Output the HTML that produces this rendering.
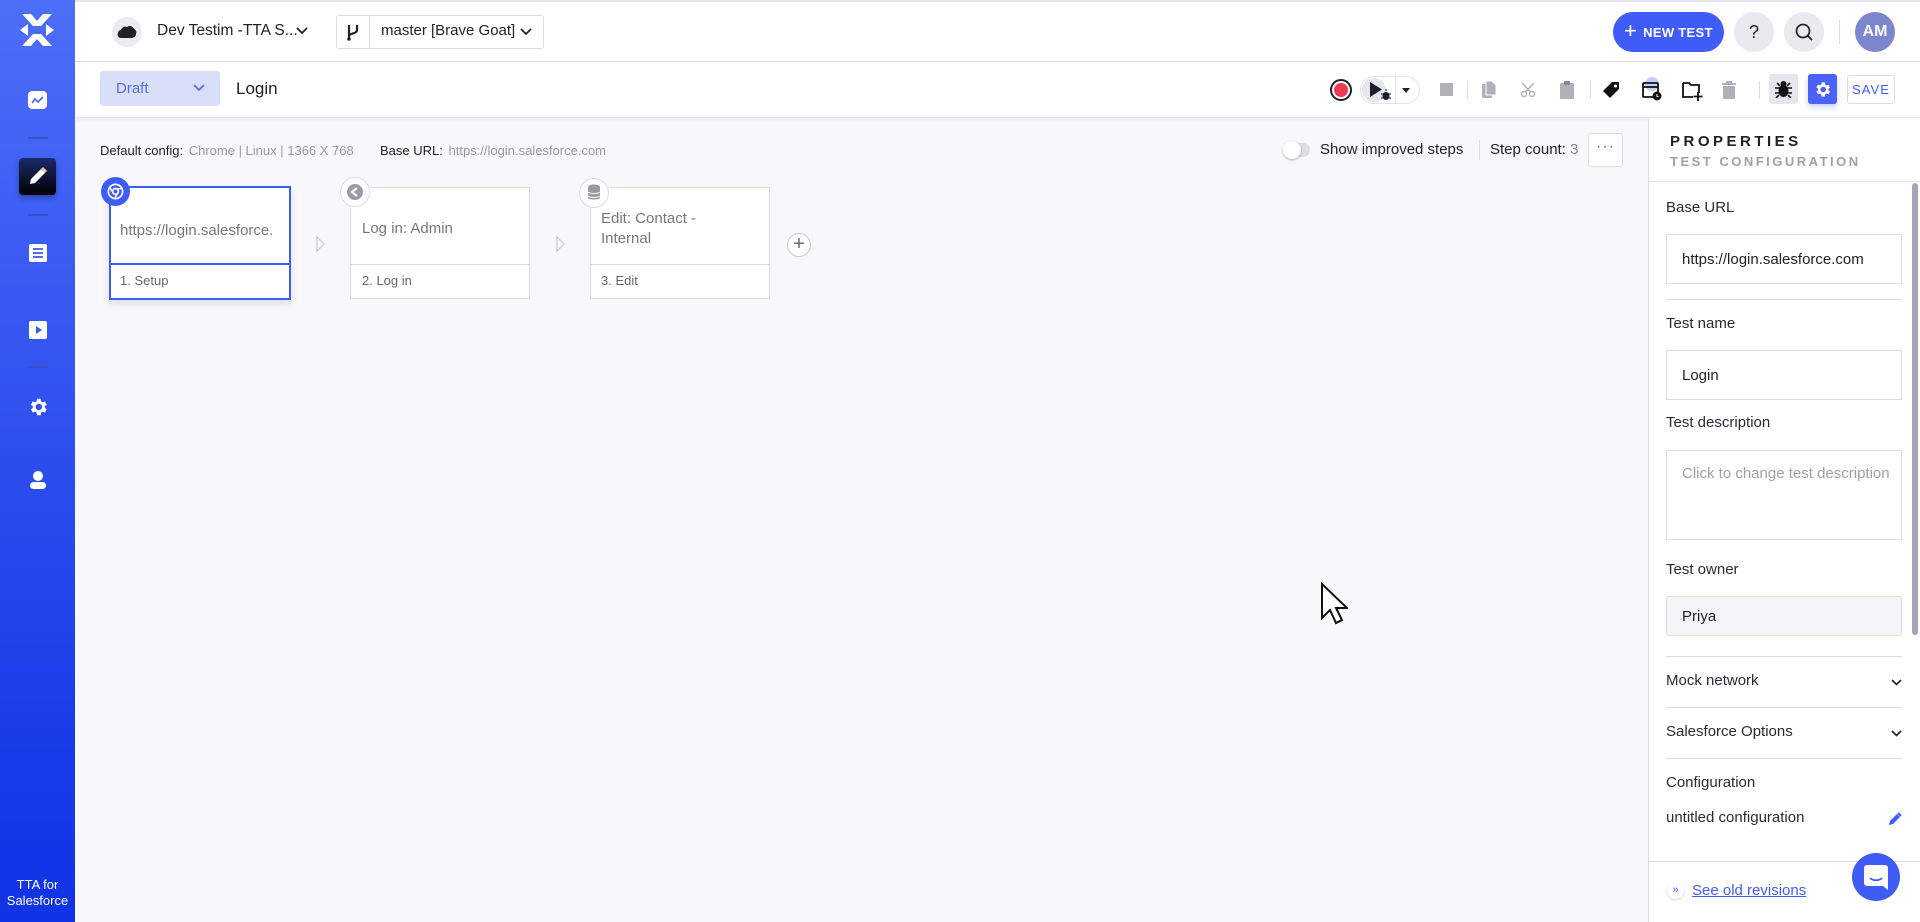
<!DOCTYPE html>
<html><head><meta charset="utf-8"><style>
*{box-sizing:border-box;margin:0;padding:0}
body{width:1920px;height:922px;overflow:hidden;font-family:"Liberation Sans",sans-serif;background:#f8f8fb;position:relative;color:#222}
.a{position:absolute}
.sb{left:0;top:0;width:75px;height:922px;background:linear-gradient(#4d6ef8,#1a3be8 80%,#1233e4)}
.div{left:28px;width:20px;height:2px;background:#3550c0}
.top{left:75px;top:0;width:1845px;height:62px;background:#fff;border-top:2px solid #e6e6ec;border-bottom:1px solid #dcdce6}
.bar2{left:75px;top:62px;width:1845px;height:56px;background:#fff;border-bottom:1px solid #e4e4ec;box-shadow:0 2px 3px rgba(0,0,0,.04)}
.lbl{font-size:15px;color:#2a2a35}
.inp{left:1666px;width:236px;border:1px solid #dcdce6;background:#fff;font-size:15px;padding-left:15px;display:flex;align-items:center}
.hr{left:1666px;width:236px;height:1px;background:#dcdce6}
.card{background:#fff;border:1px solid #dcdce6}
.ic{fill:#b0b0b8}
</style></head><body>
<div class="a sb"></div>
<svg class="a" style="left:20px;top:12px" width="34" height="36" viewBox="0 0 34 36"><g fill="#fff"><path d="M2 2h9l6 7 6-7h9L21 14h-8z"/><path d="M2 34h9l6-7 6 7h9L21 22h-8z"/><path d="M0 18l8-6v12z"/><path d="M34 18l-8-6v12z"/></g></svg>
<svg class="a" style="left:28px;top:91px" width="19" height="18" viewBox="0 0 19 18"><rect width="19" height="18" rx="4" fill="#fff"/><path d="M4 12l3-4 3 3 5-5" stroke="#4a6af6" stroke-width="1.6" fill="none"/></svg>
<div class="a div" style="top:137px"></div>
<div class="a" style="left:19px;top:158px;width:37px;height:37px;border-radius:4px;background:linear-gradient(#1b2a6b,#000);box-shadow:0 3px 6px rgba(0,0,0,.3)"></div>
<svg class="a" style="left:28px;top:166px" width="20" height="20" viewBox="0 0 20 20"><path d="M2 18l1-5L13 3l4 4L7 17z" fill="#fff"/><path d="M14 2l4 4" stroke="#f3c78a" stroke-width="3"/></svg>
<div class="a div" style="top:214px"></div>
<svg class="a" style="left:29px;top:244px" width="18" height="18" viewBox="0 0 18 18"><rect width="18" height="18" rx="2" fill="#fff"/><path d="M4 5h10M4 9h10M4 13h10" stroke="#3b5af2" stroke-width="1.8"/></svg>
<svg class="a" style="left:29px;top:321px" width="18" height="18" viewBox="0 0 18 18"><rect width="18" height="18" rx="2" fill="#fff"/><path d="M7 5v8l6-4z" fill="#3b5af2"/></svg>
<div class="a div" style="top:366px"></div>
<svg class="a" style="left:27px;top:396px" width="22" height="22" viewBox="0 0 24 24"><path fill="#fff" d="M19.4 13a7.5 7.5 0 000-2l2.1-1.6-2-3.5-2.5 1a7 7 0 00-1.7-1L14.9 3h-4l-.4 2.9a7 7 0 00-1.7 1l-2.5-1-2 3.5L6.4 11a7.5 7.5 0 000 2l-2.1 1.6 2 3.5 2.5-1a7 7 0 001.7 1l.4 2.9h4l.4-2.9a7 7 0 001.7-1l2.5 1 2-3.5zM12.9 15.5a3.5 3.5 0 110-7 3.5 3.5 0 010 7z"/></svg>
<svg class="a" style="left:28px;top:470px" width="20" height="20" viewBox="0 0 20 20"><circle cx="10" cy="6" r="5" fill="#fff"/><rect x="2" y="12" width="16" height="7" rx="3.5" fill="#fff"/></svg>
<div class="a" style="left:0;top:877px;width:75px;text-align:center;color:#fff;font-size:13px;line-height:16px">TTA for<br>Salesforce</div>

<div class="a top"></div>
<div class="a" style="left:112px;top:17px;width:30px;height:30px;border-radius:50%;background:#ececf0"></div>
<svg class="a" style="left:117px;top:24px" width="20" height="15" viewBox="0 0 20 15"><path d="M4 14c-3 0-4-3-3-5 0-2 2-3 3-3 1-3 4-4 6-3 2-2 6-1 7 2 2 1 3 3 2 5 0 3-3 4-5 4z" fill="#222"/></svg>
<div class="a" style="left:157px;top:22px;font-size:15.5px;color:#222">Dev Testim -TTA S...</div>
<svg class="a" style="left:296px;top:27px" width="12" height="8" viewBox="0 0 12 8"><path d="M1 1l5 5 5-5" stroke="#222" stroke-width="1.8" fill="none"/></svg>
<div class="a" style="left:336px;top:15px;width:208px;height:34px;border:1px solid #dcdce6;border-radius:3px;background:#fff"></div>
<div class="a" style="left:369px;top:16px;width:1px;height:32px;background:#dcdce6"></div>
<svg class="a" style="left:346px;top:23px" width="14" height="18" viewBox="0 0 14 18"><path d="M3 2v14M11 2v5c0 3-4 3-8 5" stroke="#222" stroke-width="2.2" fill="none"/><circle cx="3" cy="16" r="1.8" fill="#222"/></svg>
<div class="a" style="left:381px;top:22px;font-size:15px;color:#222">master [Brave Goat]</div>
<svg class="a" style="left:520px;top:28px" width="12" height="8" viewBox="0 0 12 8"><path d="M1 1l5 5 5-5" stroke="#222" stroke-width="1.8" fill="none"/></svg>

<div class="a" style="left:1613px;top:12px;width:111px;height:40px;border-radius:20px;background:#3f5cf6;color:#fff;font-size:13px;font-weight:bold;letter-spacing:.3px;display:flex;align-items:center;padding-left:11px;white-space:nowrap"><span style="font-size:22px;font-weight:normal;margin-right:6px;margin-top:-3px">+</span>NEW TEST</div>
<div class="a" style="left:1734px;top:12px;width:40px;height:40px;border-radius:50%;background:#e9e9ee;text-align:center;line-height:40px;font-size:18px">?</div>
<div class="a" style="left:1784px;top:12px;width:40px;height:40px;border-radius:50%;background:#e9e9ee"></div>
<svg class="a" style="left:1794px;top:22px" width="20" height="20" viewBox="0 0 20 20"><circle cx="9" cy="9" r="6.5" stroke="#222" stroke-width="1.7" fill="none"/><path d="M14 14l4 4" stroke="#222" stroke-width="1.7"/></svg>
<div class="a" style="left:1839px;top:20px;width:1px;height:24px;background:#dcdce6"></div>
<div class="a" style="left:1855px;top:12px;width:40px;height:40px;border-radius:50%;background:#7b86cf;color:#fff;text-align:center;line-height:40px;font-size:16px;font-weight:bold">AM</div>

<div class="a bar2"></div>
<div class="a" style="left:100px;top:71px;width:120px;height:35px;border-radius:3px;background:#d9dffb;color:#5a6fe0;font-size:15px;padding:9px 0 0 16px">Draft</div>
<svg class="a" style="left:193px;top:84px" width="12" height="8" viewBox="0 0 12 8"><path d="M1 1l5 5 5-5" stroke="#5a6fe0" stroke-width="1.8" fill="none"/></svg>
<div class="a" style="left:236px;top:79px;font-size:17px;color:#222">Login</div>

<div class="a" style="left:1330px;top:79px;width:22px;height:22px;border-radius:50%;border:2px solid #222;background:#fff"></div>
<div class="a" style="left:1334px;top:83px;width:14px;height:14px;border-radius:50%;background:#f03a55"></div>
<div class="a" style="left:1360px;top:76px;width:60px;height:28px;border:1px solid #e2e2ea;border-radius:14px;background:#fff"></div>
<div class="a" style="left:1362px;top:78px;width:24px;height:24px;border-radius:50%;background:#e4e6ee"></div>
<svg class="a" style="left:1369px;top:81px" width="24" height="20" viewBox="0 0 24 20"><path d="M1 1v15l12-7.5z" fill="#1c1c2c"/><ellipse cx="17" cy="15" rx="3.5" ry="4" fill="#1c1c2c"/><path d="M12 13h10M12 17h10M17 10v-2" stroke="#1c1c2c" stroke-width="1"/></svg>
<div class="a" style="left:1395px;top:77px;width:1px;height:26px;background:#e2e2ea"></div>
<svg class="a" style="left:1402px;top:88px" width="8" height="5" viewBox="0 0 8 5"><path d="M0 0h8L4 5z" fill="#222"/></svg>
<div class="a" style="left:1440px;top:83px;width:13px;height:13px;background:#b0b0b8"></div>
<div class="a" style="left:1467px;top:81px;width:1px;height:18px;background:#dcdce6"></div>
<svg class="a" style="left:1481px;top:80px" width="16" height="20" viewBox="0 0 16 20"><rect x="1" y="4" width="10" height="14" rx="1" class="ic"/><path d="M5 1h6l4 4v10H5z" class="ic" stroke="#fff" stroke-width="1"/></svg>
<svg class="a" style="left:1520px;top:82px" width="16" height="16" viewBox="0 0 16 16"><circle cx="4" cy="12" r="2.5" stroke="#b0b0b8" stroke-width="1.5" fill="none"/><circle cx="12" cy="12" r="2.5" stroke="#b0b0b8" stroke-width="1.5" fill="none"/><path d="M5.5 10L14 1M10.5 10L2 1" stroke="#b0b0b8" stroke-width="1.5"/></svg>
<svg class="a" style="left:1560px;top:80px" width="14" height="19" viewBox="0 0 14 19"><rect x="0" y="3" width="14" height="16" rx="1" class="ic"/><rect x="4" y="1" width="6" height="4" rx="1" fill="#888"/></svg>
<div class="a" style="left:1590px;top:81px;width:1px;height:18px;background:#dcdce6"></div>
<svg class="a" style="left:1603px;top:81px" width="18" height="18" viewBox="0 0 18 18"><path d="M9 1h7v7l-9 9-7-7z" fill="#111"/><circle cx="12.5" cy="5" r="1.5" fill="#fff"/></svg>
<div class="a" style="left:1645px;top:77px;width:14px;height:14px;border-radius:50%;background:#c7cff8"></div>
<svg class="a" style="left:1641px;top:79px" width="22" height="22" viewBox="0 0 22 22"><rect x="2" y="4" width="15" height="14" rx="1" stroke="#111" stroke-width="1.8" fill="none"/><path d="M2 8h15" stroke="#111" stroke-width="1.8"/><circle cx="16" cy="17" r="4.5" fill="#111"/><path d="M16 15v2.5h1.5" stroke="#fff" stroke-width="1"/></svg>
<svg class="a" style="left:1681px;top:80px" width="22" height="22" viewBox="0 0 22 22"><path d="M2 3h6l2 2h8v8M12 17H2V3" stroke="#111" stroke-width="1.8" fill="none"/><path d="M17 12v9M12.5 16.5h9" stroke="#111" stroke-width="1.8"/></svg>
<svg class="a" style="left:1722px;top:81px" width="14" height="18" viewBox="0 0 14 18"><rect x="1" y="5" width="12" height="13" rx="1" class="ic"/><rect x="0" y="2" width="14" height="2" class="ic"/><rect x="4" y="0" width="6" height="2" class="ic"/></svg>
<div class="a" style="left:1759px;top:81px;width:1px;height:18px;background:#dcdce6"></div>
<div class="a" style="left:1769px;top:74px;width:29px;height:30px;border-radius:3px;background:#e6e6ec"></div>
<svg class="a" style="left:1774px;top:80px" width="19" height="18" viewBox="0 0 19 18"><ellipse cx="9.5" cy="11" rx="5" ry="6" fill="#111"/><circle cx="9.5" cy="4" r="3" fill="#111"/><path d="M1 8h17M1 13h17M3 3l3 3M16 3l-3 3M2 18l3-3M17 18l-3-3" stroke="#111" stroke-width="1.6"/></svg>
<div class="a" style="left:1808px;top:74px;width:29px;height:30px;border-radius:3px;background:#4a62f6;box-shadow:0 3px 6px rgba(74,98,246,.3)"></div>
<svg class="a" style="left:1813px;top:80px" width="19" height="19" viewBox="0 0 24 24"><path fill="#fff" d="M19.4 13a7.5 7.5 0 000-2l2.1-1.6-2-3.5-2.5 1a7 7 0 00-1.7-1L14.9 3h-4l-.4 2.9a7 7 0 00-1.7 1l-2.5-1-2 3.5L6.4 11a7.5 7.5 0 000 2l-2.1 1.6 2 3.5 2.5-1a7 7 0 001.7 1l.4 2.9h4l.4-2.9a7 7 0 001.7-1l2.5 1 2-3.5zM12.9 15.5a3.5 3.5 0 110-7 3.5 3.5 0 010 7z"/></svg>
<div class="a" style="left:1847px;top:75px;width:48px;height:29px;border:1px solid #dcdce6;border-radius:3px;background:#fff;color:#3f5cf6;font-size:13px;letter-spacing:1px;text-align:center;line-height:27px">SAVE</div>

<div class="a" style="left:100px;top:143px;font-size:13px;color:#222">Default config: <span style="color:#9a9aa6;margin-left:2px">Chrome | Linux | 1366 X 768</span></div>
<div class="a" style="left:380px;top:143px;font-size:13px;color:#222">Base URL: <span style="color:#9a9aa6;margin-left:2px">https://login.salesforce.com</span></div>
<div class="a" style="left:1284px;top:143px;width:26px;height:14px;border-radius:7px;background:#dcdce4"></div>
<div class="a" style="left:1283px;top:141px;width:18px;height:18px;border-radius:50%;background:#fff;box-shadow:0 1px 2px rgba(0,0,0,.3)"></div>
<div class="a" style="left:1320px;top:141px;font-size:15px;color:#222">Show improved steps</div>
<div class="a" style="left:1479px;top:140px;width:1px;height:20px;background:#dcdce6"></div>
<div class="a" style="left:1490px;top:141px;font-size:15px;color:#222">Step count: <span style="color:#888">3</span></div>
<div class="a" style="left:1588px;top:133px;width:35px;height:34px;border:1px solid #dcdce6;border-radius:3px;background:#fff;text-align:center;line-height:26px;color:#666;font-size:16px;letter-spacing:1px">···</div>

<div class="a card" style="left:109px;top:186px;width:182px;height:114px;border:2px solid #3f5cf6;box-shadow:0 4px 8px rgba(0,0,0,.1)"></div>
<div class="a" style="left:109px;top:263px;width:182px;height:2px;background:#3f5cf6"></div>
<div class="a" style="left:120px;top:222px;font-size:15px;color:#777">https://login.salesforce.</div>
<div class="a" style="left:120px;top:273px;font-size:13px;color:#666">1. Setup</div>
<div class="a" style="left:101px;top:177px;width:29px;height:29px;border-radius:50%;background:#3f5cf6"></div>
<svg class="a" style="left:106px;top:182px" width="19" height="19" viewBox="0 0 20 20"><circle cx="10" cy="10" r="7.5" stroke="#fff" stroke-width="1.8" fill="none"/><circle cx="10" cy="10" r="3" stroke="#fff" stroke-width="1.8" fill="none"/><path d="M10 7h7M7.4 11.5L3.8 5.5M12.6 11.5L9 17.5" stroke="#fff" stroke-width="1.5"/></svg>

<div class="a card" style="left:350px;top:187px;width:180px;height:112px"></div>
<div class="a" style="left:350px;top:264px;width:180px;height:1px;background:#dcdce6"></div>
<div class="a card" style="left:590px;top:187px;width:180px;height:112px"></div>
<div class="a" style="left:590px;top:264px;width:180px;height:1px;background:#dcdce6"></div>
<div class="a" style="left:362px;top:220px;font-size:15px;color:#777">Log in: Admin</div>
<div class="a" style="left:362px;top:273px;font-size:13px;color:#666">2. Log in</div>
<div class="a" style="left:601px;top:209px;font-size:15px;color:#777;line-height:20px">Edit: Contact -<br>Internal</div>
<div class="a" style="left:601px;top:273px;font-size:13px;color:#666">3. Edit</div>
<div class="a" style="left:340px;top:177px;width:30px;height:30px;border-radius:50%;background:#fff;border:1px solid #dcdce6"></div>
<svg class="a" style="left:346px;top:183px" width="18" height="18" viewBox="0 0 18 18"><circle cx="9" cy="9" r="8" fill="#9a9aa6"/><path d="M11 5L6 9l5 4" stroke="#fff" stroke-width="2.2" fill="none"/></svg>
<div class="a" style="left:579px;top:178px;width:30px;height:30px;border-radius:50%;background:#fff;border:1px solid #dcdce6"></div>
<svg class="a" style="left:587px;top:184px" width="14" height="18" viewBox="0 0 14 18"><ellipse cx="7" cy="3" rx="6" ry="2.5" fill="#9a9aa6"/><path d="M1 4v10c0 2 12 2 12 0V4" fill="#9a9aa6"/><path d="M1 8c3 2 9 2 12 0M1 12c3 2 9 2 12 0" stroke="#fff" stroke-width="1" fill="none"/></svg>
<svg class="a" style="left:316px;top:236px" width="10" height="16" viewBox="0 0 10 16"><path d="M1 1l7 7-7 7z" stroke="#c8c8d2" fill="none" stroke-width="1.2"/></svg>
<svg class="a" style="left:556px;top:236px" width="10" height="16" viewBox="0 0 10 16"><path d="M1 1l7 7-7 7z" stroke="#c8c8d2" fill="none" stroke-width="1.2"/></svg>
<div class="a" style="left:787px;top:233px;width:24px;height:24px;border-radius:50%;border:1px solid #c8c8d2;background:#fff;text-align:center;line-height:21px;font-size:20px;color:#666">+</div>

<svg class="a" style="left:1320px;top:582px" width="28" height="44" viewBox="0 0 28 44"><path d="M2 2v34l8-8 6 13 6-3-6-12h11z" fill="#fff" stroke="#111" stroke-width="2"/></svg>

<div class="a" style="left:1648px;top:118px;width:272px;height:804px;background:#fff;border-left:1px solid #dcdce6"></div>
<div class="a" style="left:1670px;top:133px;font-size:15px;font-weight:bold;letter-spacing:3.5px;color:#222">PROPERTIES</div>
<div class="a" style="left:1670px;top:154px;font-size:13px;font-weight:bold;letter-spacing:2.5px;color:#a0a0ac">TEST CONFIGURATION</div>
<div class="a" style="left:1649px;top:181px;width:271px;height:1px;background:#e4e4ec"></div>
<div class="a" style="left:1912px;top:183px;width:6px;height:452px;border-radius:3px;background:#a4a6b6"></div>
<div class="a lbl" style="left:1666px;top:199px">Base URL</div>
<div class="a inp" style="top:234px;height:50px">https://login.salesforce.com</div>
<div class="a hr" style="top:299px"></div>
<div class="a lbl" style="left:1666px;top:315px">Test name</div>
<div class="a inp" style="top:350px;height:50px">Login</div>
<div class="a lbl" style="left:1666px;top:414px">Test description</div>
<div class="a inp" style="top:450px;height:90px;align-items:flex-start;padding-top:14px;color:#a0a0ac">Click to change test description</div>
<div class="a lbl" style="left:1666px;top:561px">Test owner</div>
<div class="a inp" style="top:596px;height:40px;background:#f5f5f8;border-radius:3px">Priya</div>
<div class="a hr" style="top:656px"></div>
<div class="a lbl" style="left:1666px;top:672px">Mock network</div>
<svg class="a" style="left:1891px;top:679px" width="11" height="7" viewBox="0 0 11 7"><path d="M1 1l4.5 4.5L10 1" stroke="#222" stroke-width="1.6" fill="none"/></svg>
<div class="a hr" style="top:707px"></div>
<div class="a lbl" style="left:1666px;top:723px">Salesforce Options</div>
<svg class="a" style="left:1891px;top:730px" width="11" height="7" viewBox="0 0 11 7"><path d="M1 1l4.5 4.5L10 1" stroke="#222" stroke-width="1.6" fill="none"/></svg>
<div class="a hr" style="top:758px"></div>
<div class="a lbl" style="left:1666px;top:774px">Configuration</div>
<div class="a lbl" style="left:1666px;top:809px">untitled configuration</div>
<svg class="a" style="left:1888px;top:812px" width="14" height="14" viewBox="0 0 14 14"><path d="M1 13l1-4 7-7 3 3-7 7z" fill="#3f5cf6"/><path d="M10 1l3 3" stroke="#3f5cf6" stroke-width="2"/></svg>
<div class="a" style="left:1649px;top:861px;width:271px;height:1px;background:#dcdce6"></div>
<div class="a" style="left:1667px;top:882px;width:17px;height:17px;border-radius:50%;background:#fff;box-shadow:0 1px 2px rgba(0,0,0,.2);font-size:11px;color:#3f5cf6;text-align:center;line-height:16px">»</div>
<div class="a" style="left:1692px;top:882px;font-size:15px;color:#3f5cf6;text-decoration:underline">See old revisions</div>
<div class="a" style="left:1852px;top:853px;width:48px;height:48px;border-radius:50%;background:#3f5cf6"></div>
<svg class="a" style="left:1864px;top:865px" width="24" height="25" viewBox="0 0 24 25"><path d="M3 0h18a3 3 0 013 3v22l-5-4H3a3 3 0 01-3-3V3a3 3 0 013-3z" fill="#fff"/><path d="M6 13c3 3 9 3 12 0" stroke="#3f5cf6" stroke-width="1.8" fill="none"/></svg>
</body></html>
